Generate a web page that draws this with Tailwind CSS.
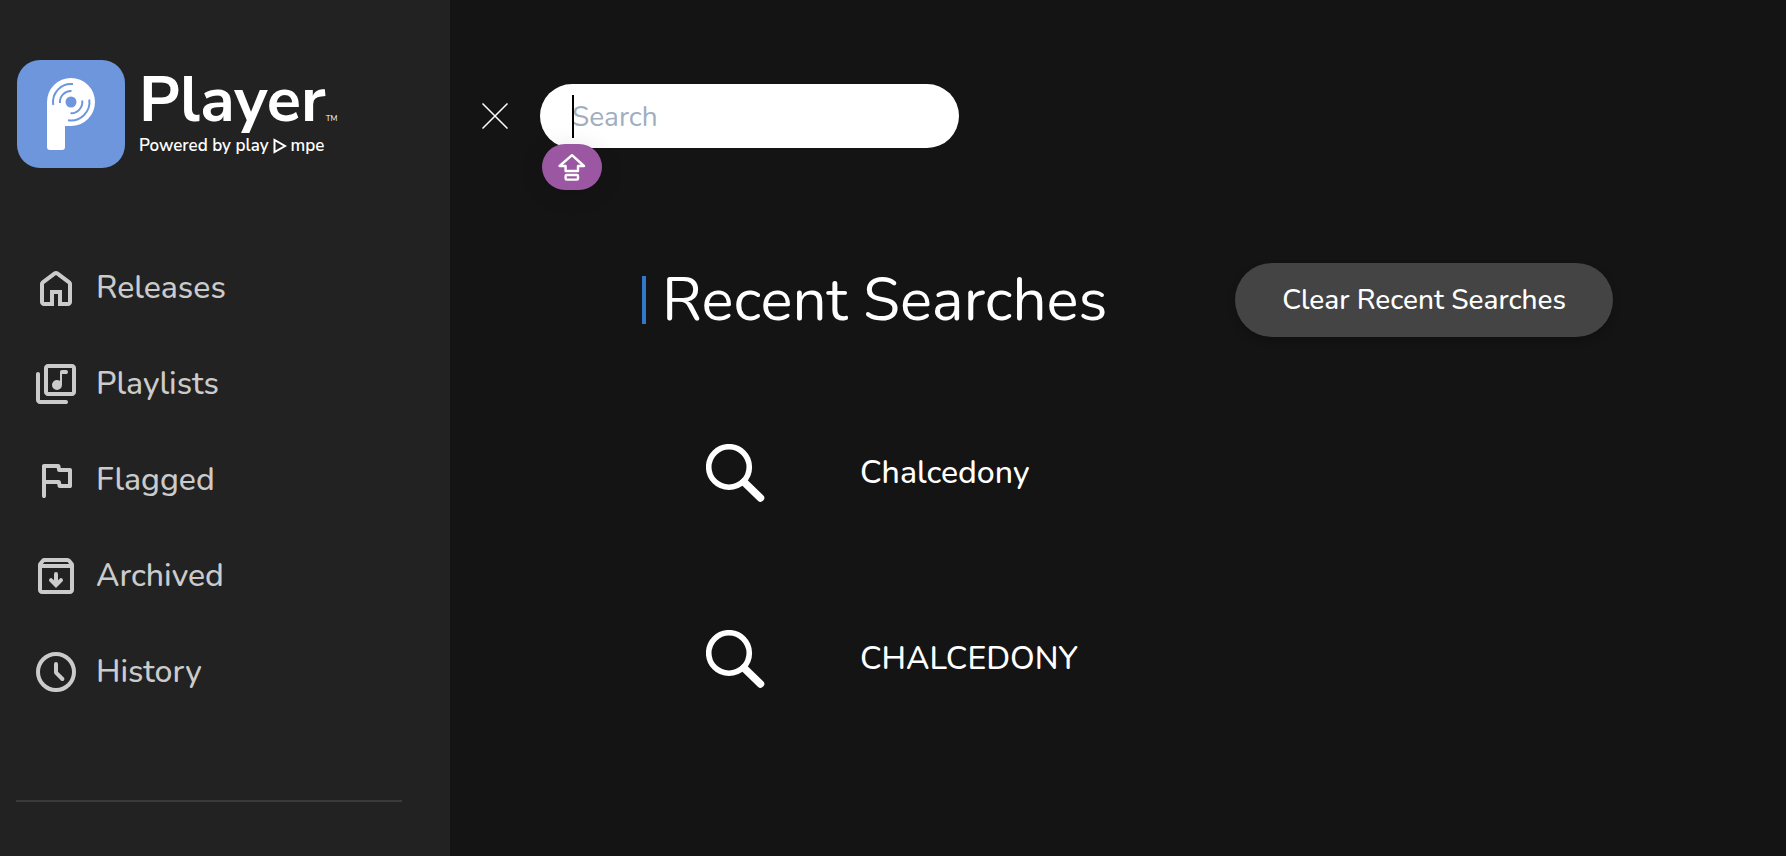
<!DOCTYPE html>
<html lang="en">
<head>
<meta charset="utf-8">
<meta name="viewport" content="width=device-width, initial-scale=1">
<title>Player – Search</title>
<script src="https://cdn.jsdelivr.net/npm/@tailwindcss/browser@4"></script>
</head>
<body class="flex min-h-screen bg-[#141414] font-['Nunito','Lato',sans-serif] text-white">
  <aside class="w-[450px] shrink-0 bg-[#222222]">
    <a href="#" aria-label="Player home" class="mt-[60px] ml-[17px] flex h-[108px] gap-3.5 font-['Nunito_Sans','Nunito','Lato',sans-serif]">
      <svg class="size-[108px] shrink-0" viewBox="0 0 108 108" aria-hidden="true">
        <rect width="108" height="108" rx="23" fill="#6d96dc"/>
        <path d="M30 42a24 24 0 1 1 24 24H48v21a3 3 0 0 1-3 3H33a3 3 0 0 1-3-3z" fill="#fff"/>
        <circle cx="54" cy="42" r="5.500" fill="#6d96dc"/>
        <g fill="none" stroke="#6d96dc" stroke-width="2">
          <path d="M36.300 45A18 18 0 0 1 56 24.100M43 43A11 11 0 0 1 54.500 31M65.200 40.500A11.300 11.300 0 0 1 53.500 53.300M72.300 39.500A18.500 18.500 0 0 1 51 60.200"/>
        </g>
      </svg>
      <span class="flex flex-col">
        <span class="flex items-end">
          <span class="text-[63px] leading-[80px] font-bold">Player</span>
          <span class="pb-4 text-[8px] leading-[10px]">TM</span>
        </span>
        <span class="-mt-1 flex items-center gap-1 text-[17px] leading-5 font-semibold">Powered by play
          <svg class="h-4 w-3.5" viewBox="0 0 14 16" fill="none" stroke="#fff" stroke-width="2" aria-hidden="true"><path d="M1.500 2v12l10.500-6z"/></svg>
          <span>mpe</span></span>
      </span>
    </a>
    <nav class="mt-24 ml-8 text-[32px] leading-[48px] font-medium text-[#cbcbcb]">
      <ul class="flex flex-col gap-12">
        <li><a href="#" class="flex gap-4"><svg class="size-12" viewBox="0 0 24 24" fill="currentColor" aria-hidden="true"><path d="M6 19h3v-6h6v6h3v-9l-6-4.500L6 10zm-2 0v-9q0-.475.213-.9t.587-.7l6-4.500q.525-.4 1.200-.4t1.200.4l6 4.500q.375.275.588.7T20 10v9q0 .825-.588 1.413T18 21h-5v-6h-2v6H6q-.825 0-1.412-.587T4 19"/></svg>Releases</a></li>
        <li><a href="#" class="flex gap-4"><svg class="size-12" viewBox="0 0 24 24" fill="currentColor" aria-hidden="true"><path d="M12.500 15q1.050 0 1.775-.725T15 12.500V7h2q.425 0 .713-.288T18 6t-.287-.712T17 5h-2q-.425 0-.712.288T14 6v4.500q-.325-.25-.7-.375T12.500 10q-1.050 0-1.775.725T10 12.500t.725 1.775T12.500 15M8 18q-.825 0-1.412-.587T6 16V4q0-.825.588-1.412T8 2h12q.825 0 1.413.588T22 4v12q0 .825-.587 1.413T20 18zm0-2h12V4H8zm-4 6q-.825 0-1.412-.587T2 20V7q0-.425.288-.712T3 6t.713.288T4 7v13h13q.425 0 .713.288T18 21t-.288.713T17 22z"/></svg>Playlists</a></li>
        <li><a href="#" class="flex gap-4"><svg class="size-12" viewBox="0 0 24 24" fill="currentColor" aria-hidden="true"><path d="M7 14v6q0 .425-.288.713T6 21t-.712-.288T5 20V5q0-.425.288-.712T6 4h7.175q.35 0 .625.225t.35.575L14.400 6H19q.425 0 .713.288T20 7v8q0 .425-.288.713T19 16h-5.175q-.35 0-.625-.225t-.35-.575L12.600 14zm7.650 0H18V8h-4.425q-.35 0-.625-.225T12.600 7.200L12.350 6H7v6h6.425q.35 0 .625.225t.35.575z"/></svg>Flagged</a></li>
        <li><a href="#" class="flex gap-4"><svg class="size-12" viewBox="0 0 24 24" fill="currentColor" aria-hidden="true"><path d="M5 8v11h14V8zm0 13q-.825 0-1.412-.587T3 19V6.525q0-.35.113-.675t.337-.6L4.700 3.725q.275-.35.687-.538T6.250 3h11.500q.45 0 .863.188t.687.537l1.250 1.525q.225.275.338.6t.112.675V19q0 .825-.587 1.413T19 21zm.4-15h13.200l-.85-1H6.250z"/><path d="M12 11v5.500M9.500 14.100l2.500 2.500 2.500-2.500" fill="none" stroke="currentColor" stroke-width="2" stroke-linecap="round"/></svg>Archived</a></li>
        <li><a href="#" class="flex gap-4"><svg class="size-12" viewBox="0 0 24 24" fill="none" stroke="currentColor" stroke-width="2" stroke-linecap="round" aria-hidden="true"><circle cx="12" cy="12" r="9"/><path d="M12 8v4.300l3.200 3.200" stroke-linejoin="bevel"/></svg>History</a></li>
      </ul>
    </nav>
    <hr class="mt-[104px] mr-12 ml-4 border-t-2 border-[#3a3a3a]">
  </aside>

  <main class="min-w-0 flex-1">
    <form class="mt-[84px] ml-8 flex items-center gap-8" onsubmit="return false">
      <button type="button" aria-label="Close search" class="flex">
        <svg class="h-[26px] w-[26px]" viewBox="0 0 26 26" fill="none" stroke="#fff" stroke-width="1.500" aria-hidden="true"><path d="M.5.5l25 25M25.500.5l-25 25"/></svg>
      </button>
      <div class="relative">
        <input type="text" aria-label="Search" placeholder="Search" class="block h-16 w-[419px] rounded-full bg-white px-8 pt-0.5 text-[28px] text-black outline-none placeholder:text-[#a0aec0]">
        <span class="absolute top-[11px] left-8 h-[43px] w-0.5 bg-black"></span>
        <span class="absolute top-[60px] left-0.5 flex h-[46px] w-[60px] items-center justify-center rounded-[23px] bg-[#9b57a2] shadow-[0_4px_24px_rgba(0,0,0,0.12)]">
          <svg class="size-7" viewBox="0 0 28 28" fill="none" stroke="#fff" stroke-width="2.400" stroke-linejoin="round" aria-hidden="true"><path d="M14 2.200L1.600 13H7.600v5h12.400v-5h6z"/><rect x="7.600" y="22" width="12.400" height="4.600" rx="1"/></svg>
        </span>
      </div>
    </form>
    <section class="mt-[115px] pr-[173px] pl-48">
      <div class="flex items-center justify-between">
        <h1 class="flex items-center gap-4 text-[60px] leading-[74px]"><span class="h-12 w-1 bg-[#3278c8]"></span>Recent Searches</h1>
        <button type="button" class="h-[74px] rounded-full bg-[#444444] px-[47px] text-[28px] font-medium shadow-[0_4px_8px_rgba(0,0,0,0.2)]">Clear Recent Searches</button>
      </div>
      <ul class="mt-[107px] ml-16 flex flex-col gap-32 text-[32px] leading-[58px] font-medium">
        <li><a href="#" class="flex gap-[95px]"><svg class="h-[58px] w-[59px]" viewBox="0 0 59 58" fill="none" stroke="#fff" aria-hidden="true"><circle cx="23" cy="23" r="20.300" stroke-width="5.600"/><path d="M38 38l16.500 16" stroke-width="7.500" stroke-linecap="round"/></svg>Chalcedony</a></li>
        <li><a href="#" class="flex gap-[95px]"><svg class="h-[58px] w-[59px]" viewBox="0 0 59 58" fill="none" stroke="#fff" aria-hidden="true"><circle cx="23" cy="23" r="20.300" stroke-width="5.600"/><path d="M38 38l16.500 16" stroke-width="7.500" stroke-linecap="round"/></svg>CHALCEDONY</a></li>
      </ul>
    </section>
  </main>
</body>
</html>
